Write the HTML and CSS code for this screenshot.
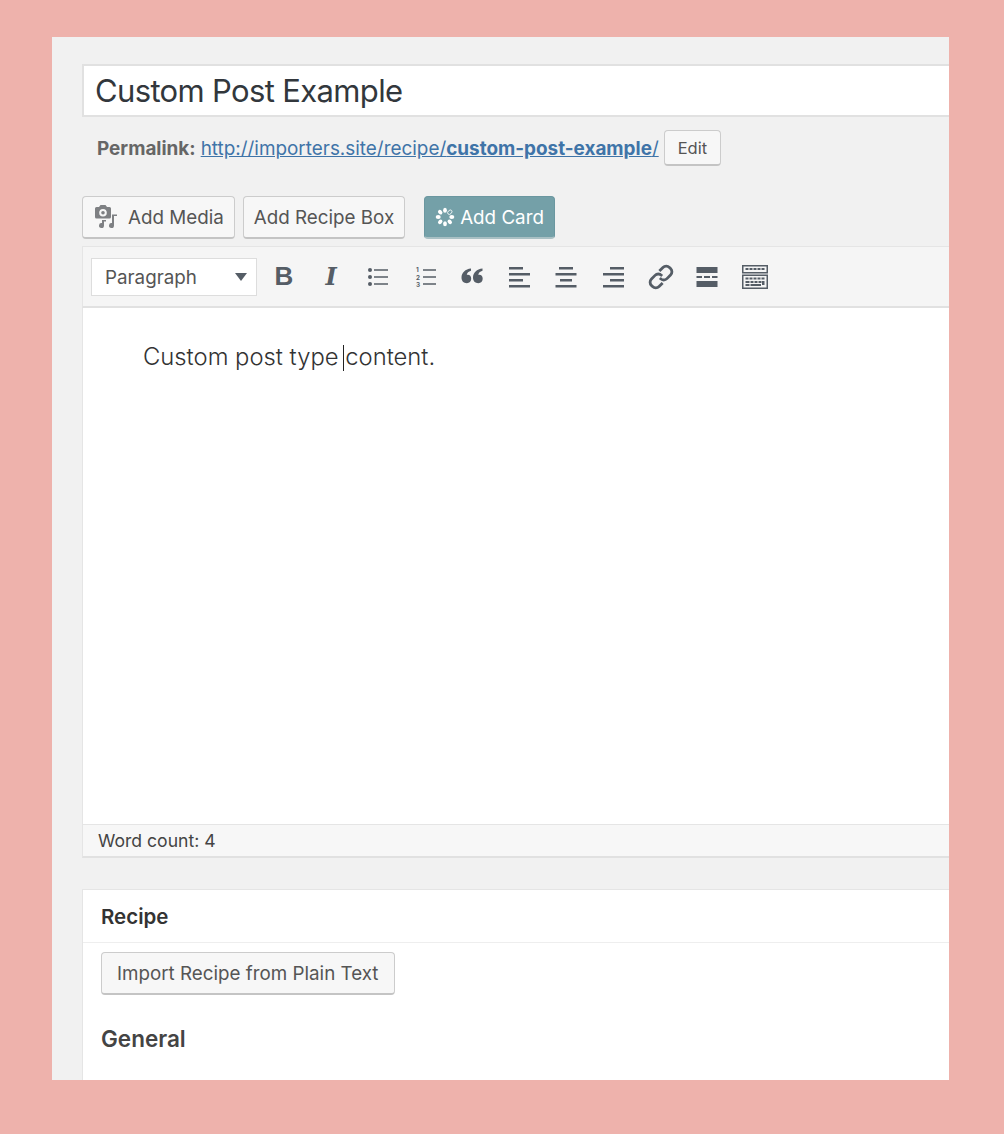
FILE: index.html
```html
<!DOCTYPE html>
<html>
  <head>
    <meta charset="utf-8">
    <title>Custom Post Example</title>
    <link rel="stylesheet" href="styles.css">
  </head>
  <body>
    <div class="panel">
      <div class="title-box">Custom Post Example</div>

      <div class="permalink">
        <b class="permalink-label">Permalink:</b>
        <a class="permalink-url" href="#">http://importers.site/recipe/<b>custom-post-example</b>/</a>
        <span class="btn btn-edit">Edit</span>
      </div>

      <div class="media-row">
        <span class="btn btn-large btn-media">
          <svg class="icon-media" width="26" height="26" viewBox="0 0 26 26">
            <path fill="#7e8083" fill-rule="evenodd" d="M3.500 3H6l1.500-2h5L14 3h2.500A1.500 1.500 0 0 1 18 4.500V13a1.500 1.500 0 0 1-1.500 1.500h-13A1.500 1.500 0 0 1 2 13V4.500A1.500 1.500 0 0 1 3.500 3zM10 5a3.800 3.800 0 1 0 0 7.600A3.800 3.800 0 0 0 10 5z"/>
            <circle cx="10" cy="8.800" r="1.800" fill="#7e8083"/>
            <path fill="#7e8083" d="M9 16h4v1.500h-2v4a2.500 2.500 0 1 1-2-2.400zM19 10.500h5V12h-3v9.500a2.500 2.500 0 1 1-2-2.400z"/>
          </svg>
          Add Media
        </span>
        <span class="btn btn-large">Add Recipe Box</span>
        <span class="btn btn-large btn-card">
          <svg width="20" height="20" viewBox="0 0 20 20" fill="#fff">
            <ellipse cx="10" cy="3.200" rx="1.900" ry="2.500"/>
            <ellipse cx="14.800" cy="5.200" rx="1.800" ry="2.500" transform="rotate(45 14.800 5.200)" fill="none" stroke="#fff" stroke-width=".8"/>
            <ellipse cx="16.800" cy="10" rx="2.500" ry="1.900"/>
            <ellipse cx="14.800" cy="14.800" rx="1.900" ry="2.500" transform="rotate(-45 14.800 14.800)"/>
            <ellipse cx="10" cy="16.800" rx="1.900" ry="2.500"/>
            <ellipse cx="5.200" cy="14.800" rx="1.900" ry="2.500" transform="rotate(45 5.200 14.800)"/>
            <ellipse cx="3.200" cy="10" rx="2.500" ry="1.900"/>
            <ellipse cx="5.200" cy="5.200" rx="1.900" ry="2.500" transform="rotate(-45 5.200 5.200)"/>
          </svg>
          Add Card
        </span>
      </div>

      <div class="editor">
        <div class="toolbar">
          <div class="format-select">
            <span class="format-label">Paragraph</span>
            <span class="caret"></span>
          </div>
          <div class="tools">
            <span class="tool tool-b">B</span>
            <span class="tool tool-i">I</span>
            <svg class="tool" width="24" height="24" viewBox="0 0 24 24" fill="#555d66">
              <circle cx="4" cy="5" r="2"/><circle cx="4" cy="12" r="2"/><circle cx="4" cy="19" r="2"/>
              <path d="M8 4.200h14v1.500H8zM8 11.200h14v1.500H8zM8 18.200h14v1.500H8z"/>
            </svg>
            <svg class="tool" width="24" height="24" viewBox="0 0 24 24" fill="#555d66">
              <path d="M10 4.200h13v1.500H10zM10 11.200h13v1.500H10zM10 18.200h13v1.500H10z"/>
              <text x="3" y="7" class="ol-num">1</text>
              <text x="3" y="14.700" class="ol-num">2</text>
              <text x="3" y="22.400" class="ol-num">3</text>
            </svg>
            <svg class="tool" width="24" height="24" viewBox="0 0 24 24" fill="#555d66">
              <path d="M11 3.500v2.300C8.500 6.500 7 8 6.800 10c2.500-.6 4.400 1 4.400 3.800 0 2.500-1.800 4.400-4.300 4.400C3.500 18.200 1.500 16 1.500 12.500c0-4.800 3.800-8.500 9.500-9zM22.500 3.500v2.300c-2.500.7-4 2.200-4.200 4.200 2.500-.6 4.400 1 4.400 3.800 0 2.500-1.800 4.400-4.300 4.400-3.400 0-5.400-2.200-5.400-5.700 0-4.800 3.800-8.500 9.500-9z"/>
            </svg>
            <svg class="tool" width="24" height="24" viewBox="0 0 24 24" fill="#555d66">
              <path d="M2 2h14v2.500H2zM2 8h21v2.500H2zM2 14h14v2.500H2zM2 20h21v2.500H2z"/>
            </svg>
            <svg class="tool" width="24" height="24" viewBox="0 0 24 24" fill="#555d66">
              <path d="M5 2h14v2.500H5zM1.500 8h21v2.500h-21zM6 14h12v2.500H6zM1.500 20h21v2.500h-21z"/>
            </svg>
            <svg class="tool" width="24" height="24" viewBox="0 0 24 24" fill="#555d66">
              <path d="M9 2h14v2.500H9zM2 8h21v2.500H2zM9 14h14v2.500H9zM2 20h21v2.500H2z"/>
            </svg>
            <svg class="tool" width="26" height="26" viewBox="0 0 24 24" fill="none" stroke="#555d66" stroke-width="2.600">
              <path d="M10.500 6.500l3.300-3.300a4.200 4.200 0 0 1 6 0l1 1a4.200 4.200 0 0 1 0 6l-3.300 3.300a4.200 4.200 0 0 1-6 0l-.5-.5"/>
              <path d="M13.500 17.500l-3.300 3.300a4.200 4.200 0 0 1-6 0l-1-1a4.200 4.200 0 0 1 0-6l3.300-3.300a4.200 4.200 0 0 1 6 0l.5.5"/>
            </svg>
            <svg class="tool tool-hr" width="24" height="24" viewBox="0 0 24 24" fill="#555d66">
              <path d="M1.500 2h21v6h-21zM1.500 11h5.500v2H1.500zM9 11h6v2H9zM17 11h5.500v2H17zM1.500 16h21v6h-21z"/>
            </svg>
            <svg class="tool tool-kitchen" width="28" height="24" viewBox="0 0 28 24">
              <path fill="#555d66" fill-rule="evenodd" d="M1 0h26v8.500H1zM2.500 1.500v5.500h23V1.500zM1 9.500h26V24H1zM2.500 11v11.500h23V11z"/>
              <path fill="#555d66" d="M4.500 3h3v2h-3zM8.500 3h3v2h-3zM12.500 3h3v2h-3zM16.500 3h3v2h-3zM20.500 3h3v2h-3zM4.500 12.500h3v2h-3zM8.500 12.500h3v2h-3zM12.500 12.500h3v2h-3zM16.500 12.500h3v2h-3zM20.500 12.500h3v2h-3zM4.500 16h4v2h-4zM9.500 16h3v2h-3zM13.500 16h3v2h-3zM17.500 16h3v2h-3zM21 16h2.500v4H21zM4.500 19h4v2h-4zM9.500 19h10.500v2H9.500z"/>
            </svg>
          </div>
        </div>
        <div class="editor-body">
          <p class="editor-text">Custom post type <span class="cursor"></span>content.</p>
        </div>
        <div class="status-bar">Word count: 4</div>
      </div>

      <div class="recipe-box">
        <h2 class="recipe-head">Recipe</h2>
        <div class="recipe-body">
          <span class="btn btn-large btn-import">Import Recipe from Plain Text</span>
          <h3 class="recipe-section">General</h3>
        </div>
      </div>
    </div>
  </body>
</html>
```
FILE: styles.css
```css
body {
  margin: 0;
  background: #eeb2ac;
  font-family: Inter, "Liberation Sans", sans-serif;
  color: #444;
}
.panel {
  box-sizing: border-box;
  width: 897px;
  height: 1043px;
  margin: 37px 0 54px 52px;
  padding: 27px 0 0 30px;
  background: #f1f1f1;
  overflow: hidden;
}

.title-box {
  box-sizing: border-box;
  width: 880px;
  height: 53px;
  padding-left: 11px;
  border: 2px solid #e1e1e1;
  background: #fff;
  font-size: 31px;
  letter-spacing: -0.65px;
  line-height: 50px;
  color: #32373c;
}

.permalink {
  display: flex;
  align-items: center;
  height: 36px;
  margin-top: 13px;
  padding-left: 15px;
  font-size: 18.900px;
  color: #666;
}
.permalink-label {
  margin-right: 5px;
}
.permalink-url {
  color: #3f74a8;
}
.btn {
  display: inline-flex;
  align-items: center;
  box-sizing: border-box;
  border: 1px solid #ccc;
  border-bottom: 2px solid #c4c4c4;
  border-radius: 4px;
  background: #f7f7f7;
  color: #555;
  white-space: nowrap;
}
.btn-edit {
  height: 36px;
  margin-left: 5px;
  padding: 0 13px;
  font-size: 16.500px;
}

.media-row {
  display: flex;
  gap: 8px;
  margin-top: 30px;
}
.btn-large {
  height: 43px;
  padding: 0 10px;
  font-size: 18.800px;
}
.btn-media {
  gap: 9px;
}
.btn-card {
  margin-left: 11px;
  gap: 5px;
  background: #74a0a8;
  border-color: #6b97a0;
  border-bottom-color: #a9c0c4;
  color: #fff;
}

.editor {
  width: 880px;
  margin-top: 7px;
}
.toolbar {
  display: flex;
  align-items: center;
  box-sizing: border-box;
  height: 62px;
  padding-left: 8px;
  background: #f5f5f5;
  border: 1px solid #e5e5e5;
  border-bottom: 2px solid #e1e1e1;
}
.format-select {
  display: flex;
  align-items: center;
  justify-content: space-between;
  box-sizing: border-box;
  width: 166px;
  height: 38px;
  padding: 0 9px 0 13px;
  background: #fff;
  border: 1px solid #ddd;
  font-size: 18.800px;
  color: #555;
}
.format-label {
  padding-top: 2px;
}
.caret {
  border-left: 6px solid transparent;
  border-right: 6px solid transparent;
  border-top: 8px solid #555d66;
}
.tools {
  display: flex;
  align-items: center;
  gap: 23px;
  margin-left: 15px;
}
.tool {
  flex: none;
  display: block;
  color: #555d66;
}
.tool-b {
  width: 24px;
  font: bold 26px "Liberation Sans", sans-serif;
  text-align: center;
}
.tool-i {
  width: 24px;
  font: italic bold 24px "DejaVu Serif", serif;
  text-align: center;
}
.tool-hr {
  margin-left: -2px;
}
.tool-kitchen {
  margin-left: -1px;
}
.ol-num {
  font: 700 6.300px Inter, sans-serif;
}

.editor-body {
  box-sizing: border-box;
  height: 516px;
  padding: 34px 0 0 60px;
  background: #fff;
  border-left: 1px solid #e5e5e5;
}
.editor-text {
  margin: 0;
  font-size: 23.800px;
  line-height: 30px;
  font-weight: 300;
  color: #333;
}
.cursor {
  display: inline-block;
  width: 1px;
  height: 26px;
  margin: 0 1px 0 -2px;
  vertical-align: -6px;
  background: #222;
}
.status-bar {
  box-sizing: border-box;
  height: 34px;
  padding-left: 15px;
  background: #f7f7f7;
  border: 1px solid #e5e5e5;
  border-bottom: 2px solid #e1e1e1;
  font-size: 17.600px;
  line-height: 32px;
  color: #444;
}

.recipe-box {
  box-sizing: border-box;
  width: 880px;
  height: 200px;
  margin-top: 31px;
  background: #fff;
  border: 1px solid #e5e5e5;
}
.recipe-head {
  box-sizing: border-box;
  height: 53px;
  margin: 0;
  padding-left: 18px;
  border-bottom: 1px solid #eee;
  font-size: 20.500px;
  font-weight: 600;
  line-height: 53px;
  color: #333;
}
.recipe-body {
  padding: 9px 0 0 18px;
}
.btn-import {
  padding: 0 15px;
}
.recipe-section {
  margin: 30px 0 0;
  font-size: 22.500px;
  font-weight: 600;
  color: #444;
}
```
